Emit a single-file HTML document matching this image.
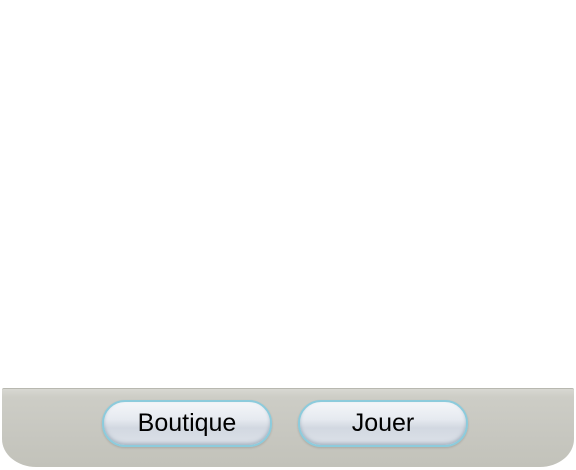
<!DOCTYPE html>
<html><head><style>
body{margin:0;width:576px;height:470px;background:#fff;position:relative;overflow:hidden;font-family:"Liberation Sans","DejaVu Sans",sans-serif}
.panel{position:absolute;left:2px;top:388px;width:572px;height:78px;background:linear-gradient(#d8d8d2 0,#cdcdc6 8px,#c8c8c1 50%,#c2c2ba 100%);border-radius:2px 2px 34px 34px / 2px 2px 28px 28px;border-top:1px solid #b8b8b0}
.btn{position:absolute;top:400px;width:166px;height:43px;border-radius:23px;border:2px solid #8ccbdc;background:linear-gradient(#f4f6f9 0,#e6eaf0 40%,#d2d8e1 60%,#dce1e8 100%);box-shadow:inset 0 -2px 3px rgba(120,140,160,.5),0 1px 2px rgba(0,0,0,.15);text-align:center;line-height:42px;font-size:25px;color:#000}
</style></head><body>
<div class="panel"></div>
<div class="btn" style="left:102px">Boutique</div>
<div class="btn" style="left:298px">Jouer</div>
</body></html>
